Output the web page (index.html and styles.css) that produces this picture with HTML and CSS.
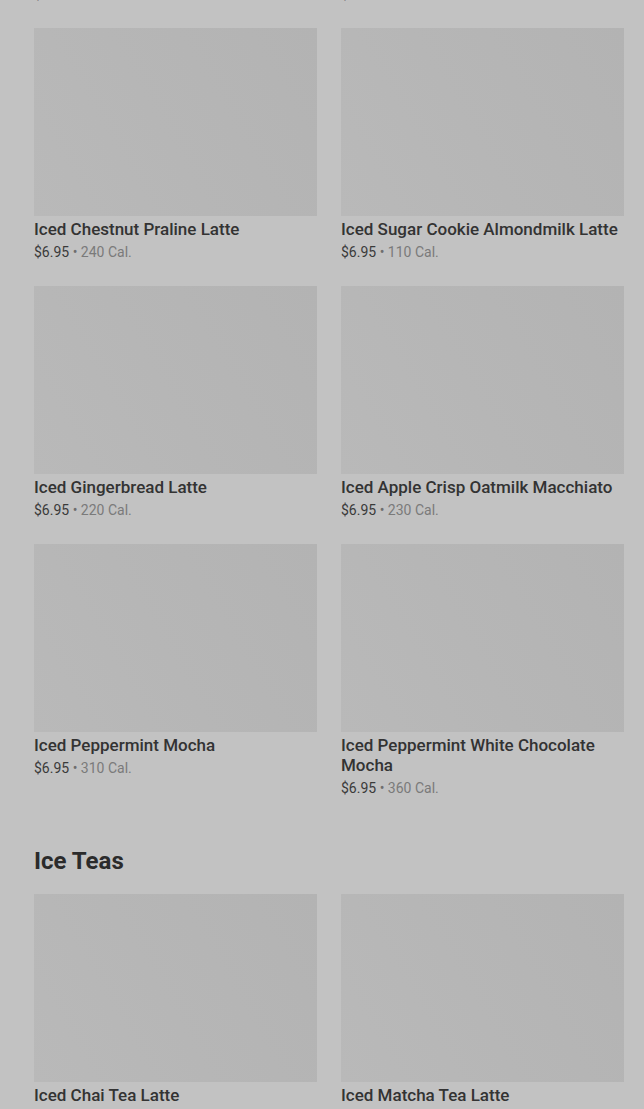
FILE: index.html
```html
<!DOCTYPE html>
<html lang="en">
<head>
<meta charset="utf-8">
<title>Menu</title>
<link rel="stylesheet" href="styles.css">
</head>
<body>
<main class="page">
  <section class="section">
    <div class="grid">
      <div class="card"><div class="thumb"></div><div class="name">Iced Caramel Brulée Latte</div><div class="meta"><span class="price">$6.95</span> • <span class="cal">250 Cal.</span></div></div>
      <div class="card"><div class="thumb"></div><div class="name">Iced Toasted White Chocolate Mocha</div><div class="meta"><span class="price">$6.95</span> • <span class="cal">290 Cal.</span></div></div>
      <div class="card"><div class="thumb"></div><div class="name">Iced Chestnut Praline Latte</div><div class="meta"><span class="price">$6.95</span> • <span class="cal">240 Cal.</span></div></div>
      <div class="card"><div class="thumb"></div><div class="name">Iced Sugar Cookie Almondmilk Latte</div><div class="meta"><span class="price">$6.95</span> • <span class="cal">110 Cal.</span></div></div>
      <div class="card"><div class="thumb"></div><div class="name">Iced Gingerbread Latte</div><div class="meta"><span class="price">$6.95</span> • <span class="cal">220 Cal.</span></div></div>
      <div class="card"><div class="thumb"></div><div class="name">Iced Apple Crisp Oatmilk Macchiato</div><div class="meta"><span class="price">$6.95</span> • <span class="cal">230 Cal.</span></div></div>
      <div class="card"><div class="thumb"></div><div class="name">Iced Peppermint Mocha</div><div class="meta"><span class="price">$6.95</span> • <span class="cal">310 Cal.</span></div></div>
      <div class="card"><div class="thumb"></div><div class="name">Iced Peppermint White Chocolate Mocha</div><div class="meta"><span class="price">$6.95</span> • <span class="cal">360 Cal.</span></div></div>
    </div>
  </section>
  <section class="section section-next">
    <h2 class="heading">Ice Teas</h2>
    <div class="grid">
      <div class="card"><div class="thumb"></div><div class="name">Iced Chai Tea Latte</div><div class="meta"><span class="price">$5.95</span> • <span class="cal">240 Cal.</span></div></div>
      <div class="card"><div class="thumb"></div><div class="name">Iced Matcha Tea Latte</div><div class="meta"><span class="price">$5.95</span> • <span class="cal">200 Cal.</span></div></div>
    </div>
  </section>
</main>
</body>
</html>
```
FILE: styles.css
```css
html, body {
  margin: 0;
  padding: 0;
  background: #c2c2c2;
}
body {
  font-family: Roboto, "Liberation Sans", Arial, sans-serif;
  color: #2e2e2e;
  overflow: hidden;
}
.page {
  margin-top: -230px;
  padding: 0 20px 0 34px;
}
.grid {
  display: grid;
  grid-template-columns: 283px 283px;
  column-gap: 24px;
  row-gap: 24px;
}
.card {
  display: flex;
  flex-direction: column;
}
.thumb {
  height: 188px;
  background: linear-gradient(60deg, #b9b9b9 0%, #b6b6b6 45%, #b3b3b3 100%);
}
.name {
  margin-top: 3px;
  font-size: 17px;
  line-height: 20px;
  font-weight: 500;
  color: #333333;
}
.meta {
  margin-top: 3px;
  font-size: 14px;
  line-height: 20px;
  color: #6e6e6e;
}
.price {
  color: #3a3a3a;
}
.cal {
  color: #7a7a7a;
}
.section-next {
  margin-top: 47px;
}
.heading {
  margin: 0 0 17px;
  font-size: 24px;
  line-height: 32px;
  font-weight: 700;
  color: #2b2b2b;
}
```
